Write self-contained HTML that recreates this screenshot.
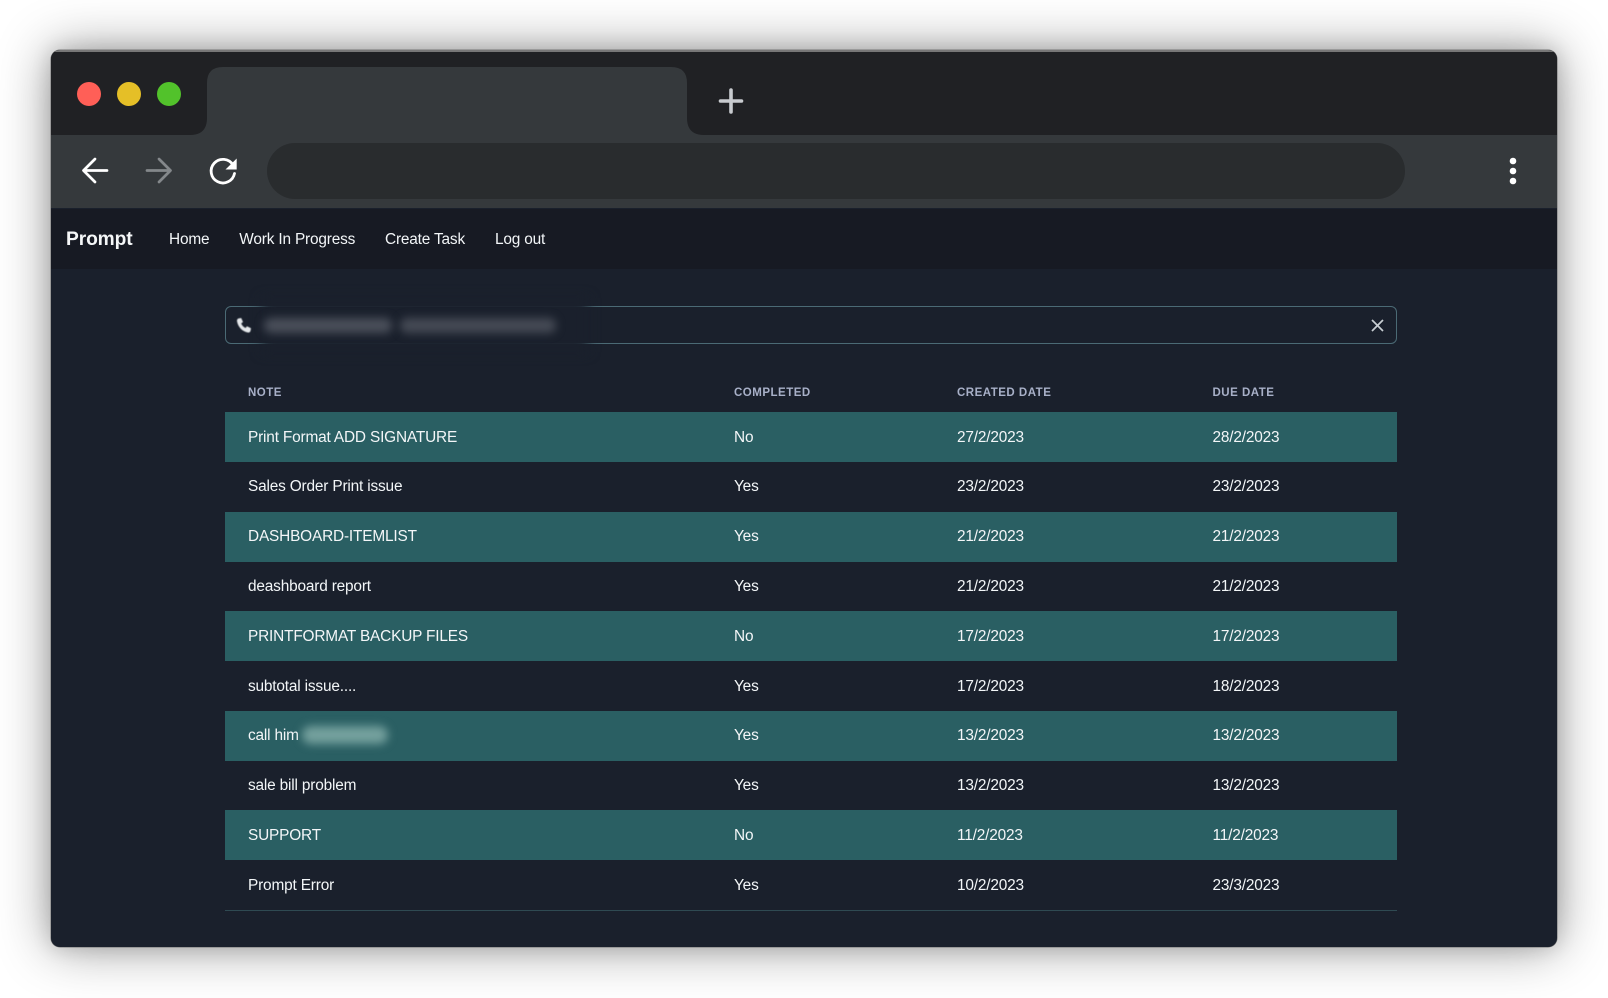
<!DOCTYPE html>
<html><head><meta charset="utf-8"><style>
*{box-sizing:border-box;margin:0;padding:0}
html,body{width:1608px;height:998px;overflow:hidden;background:#fff;font-family:"Liberation Sans",sans-serif}
.a{position:absolute}
#win{left:50.5px;top:50px;width:1506.5px;height:897px;border-radius:9px;overflow:hidden;background:#1a202c;box-shadow:0 0 0 .5px #777}
#shadow{left:50.5px;top:50px;width:1506.5px;height:897px;border-radius:9px;box-shadow:0 0 52px rgba(0,0,0,.42),0 0 20px rgba(0,0,0,.14)}
.t{position:absolute;white-space:nowrap;line-height:20px;font-size:15.4px;color:#f3f6f8;filter:blur(.3px);letter-spacing:-.17px}
.h{position:absolute;white-space:nowrap;line-height:14px;font-size:11.5px;font-weight:bold;letter-spacing:.5px;color:#a8b0c8;filter:blur(.35px)}
.r{position:absolute;left:225.2px;width:1171.8px;height:50px;background:#2a5f63}
</style></head><body>
<div id="shadow" class="a"></div>
<div id="win" class="a"></div>
<div class="a" style="left:50.5px;top:50px;width:1506.5px;height:897px;border-radius:9px;overflow:hidden">
<div class="a" style="left:0;top:0;width:1507px;height:85px;background:#202124"></div>
<div class="a" style="left:0;top:85px;width:1507px;height:73px;background:#35393c"></div>
<div class="a" style="left:0;top:158.5px;width:1507px;height:60.5px;background:#171a23"></div>
<div class="a" style="left:0;top:0;width:1507px;height:1.5px;background:#777"></div>
</div>
<svg class="a" style="left:0;top:0" width="1608" height="998">
<path d="M190 135Q207 135 207 118V83Q207 67 223 67H671Q687 67 687 83V118Q687 135 704 135Z" fill="#35393c"/>
<circle cx="89" cy="94" r="12" fill="#ff5f57"/>
<circle cx="129" cy="94" r="12" fill="#e5bf27"/>
<circle cx="169" cy="94" r="12" fill="#52c22b"/>
<path d="M731 90V112M720.500 101H741.500" stroke="#c8cbcf" stroke-width="3.600" stroke-linecap="round"/>
<rect x="267" y="143" width="1138" height="56" rx="28" fill="#292c2e"/>
<path d="M107 170.500H84M95 159L83.500 170.500L95 182" fill="none" stroke="#fff" stroke-width="2.700" stroke-linecap="round" stroke-linejoin="round"/>
<path d="M147 170.500H170M159 159L170.500 170.500L159 182" fill="none" stroke="#84888b" stroke-width="2.700" stroke-linecap="round" stroke-linejoin="round"/>
<path d="M233 165A11.800 11.800 0 1 0 234.500 173.500" fill="none" stroke="#fff" stroke-width="2.800" stroke-linecap="round"/>
<path d="M236.700 158.500V169.500H225.500Z" fill="#fff"/>
<circle cx="1513" cy="161" r="3.300" fill="#fff"/><circle cx="1513" cy="171" r="3.300" fill="#fff"/><circle cx="1513" cy="181" r="3.300" fill="#fff"/>
</svg>
<div class="t" style="left:66px;top:229.500px;font-size:19.200px;font-weight:bold;color:#f5f7f8;letter-spacing:-.1px">Prompt</div>
<div class="t" style="left:169px;top:229.500px">Home</div>
<div class="t" style="left:239.300px;top:229.500px">Work In Progress</div>
<div class="t" style="left:385px;top:229.500px">Create Task</div>
<div class="t" style="left:495px;top:229.500px">Log out</div>
<div class="a" style="left:225.200px;top:306px;width:1171.800px;height:38px;border:1.500px solid #4b6a75;border-radius:6px"></div>
<div class="a" style="left:262px;top:298px;width:326px;height:54px;background:#1a202c;filter:blur(6px)"></div>
<div class="a" style="left:264px;top:318px;width:128px;height:15px;background:#4a4f5a;border-radius:7px;filter:blur(4.500px)"></div>
<div class="a" style="left:400px;top:318px;width:156px;height:15px;background:#454a55;border-radius:7px;filter:blur(4.500px)"></div>
<svg class="a" style="left:236px;top:317px;filter:blur(.4px)" width="16" height="17" viewBox="0 0 16 17"><path d="M2.300 1.500L5.200 1L7 5L5.200 6.500C6 8.500 7.500 10 9.500 11L11 9.300L15 11.300L14.500 14C14.200 15 13 15.800 11.800 15.500C6.500 14.500 2 10 1 4.200C.8 3 1.300 2 2.300 1.500Z" fill="#e4e7ea"/></svg>
<svg class="a" style="left:1370px;top:318px" width="15" height="15"><path d="M2 2L13 13M13 2L2 13" stroke="#c9ced3" stroke-width="1.700"/></svg>
<div class="h" style="left:248px;top:386px">NOTE</div>
<div class="h" style="left:734px;top:386px">COMPLETED</div>
<div class="h" style="left:957px;top:386px">CREATED DATE</div>
<div class="h" style="left:1212.500px;top:386px">DUE DATE</div>
<div class="r" style="top:412px"></div>
<div class="r" style="top:511.500px"></div>
<div class="r" style="top:611px"></div>
<div class="r" style="top:710.500px"></div>
<div class="r" style="top:810px"></div>
<div class="a" style="left:225.200px;top:909.500px;width:1171.800px;height:1px;background:#2f4a52"></div>
<div class="t" style="left:248px;top:427.500px">Print Format ADD SIGNATURE</div><div class="t" style="left:734px;top:427.500px">No</div><div class="t" style="left:957px;top:427.500px">27/2/2023</div><div class="t" style="left:1212.500px;top:427.500px">28/2/2023</div>
<div class="t" style="left:248px;top:477px">Sales Order Print issue</div><div class="t" style="left:734px;top:477px">Yes</div><div class="t" style="left:957px;top:477px">23/2/2023</div><div class="t" style="left:1212.500px;top:477px">23/2/2023</div>
<div class="t" style="left:248px;top:527px">DASHBOARD-ITEMLIST</div><div class="t" style="left:734px;top:527px">Yes</div><div class="t" style="left:957px;top:527px">21/2/2023</div><div class="t" style="left:1212.500px;top:527px">21/2/2023</div>
<div class="t" style="left:248px;top:577px">deashboard report</div><div class="t" style="left:734px;top:577px">Yes</div><div class="t" style="left:957px;top:577px">21/2/2023</div><div class="t" style="left:1212.500px;top:577px">21/2/2023</div>
<div class="t" style="left:248px;top:626.500px">PRINTFORMAT BACKUP FILES</div><div class="t" style="left:734px;top:626.500px">No</div><div class="t" style="left:957px;top:626.500px">17/2/2023</div><div class="t" style="left:1212.500px;top:626.500px">17/2/2023</div>
<div class="t" style="left:248px;top:676.500px">subtotal issue....</div><div class="t" style="left:734px;top:676.500px">Yes</div><div class="t" style="left:957px;top:676.500px">17/2/2023</div><div class="t" style="left:1212.500px;top:676.500px">18/2/2023</div>
<div class="t" style="left:248px;top:726px">call him</div><div class="t" style="left:734px;top:726px">Yes</div><div class="t" style="left:957px;top:726px">13/2/2023</div><div class="t" style="left:1212.500px;top:726px">13/2/2023</div>
<div class="a" style="left:302px;top:726px;width:86px;height:18px;background:#74a09d;border-radius:9px;filter:blur(4.500px)"></div>
<div class="t" style="left:248px;top:775.500px">sale bill problem</div><div class="t" style="left:734px;top:775.500px">Yes</div><div class="t" style="left:957px;top:775.500px">13/2/2023</div><div class="t" style="left:1212.500px;top:775.500px">13/2/2023</div>
<div class="t" style="left:248px;top:825.500px">SUPPORT</div><div class="t" style="left:734px;top:825.500px">No</div><div class="t" style="left:957px;top:825.500px">11/2/2023</div><div class="t" style="left:1212.500px;top:825.500px">11/2/2023</div>
<div class="t" style="left:248px;top:875.500px">Prompt Error</div><div class="t" style="left:734px;top:875.500px">Yes</div><div class="t" style="left:957px;top:875.500px">10/2/2023</div><div class="t" style="left:1212.500px;top:875.500px">23/3/2023</div>
</body></html>
